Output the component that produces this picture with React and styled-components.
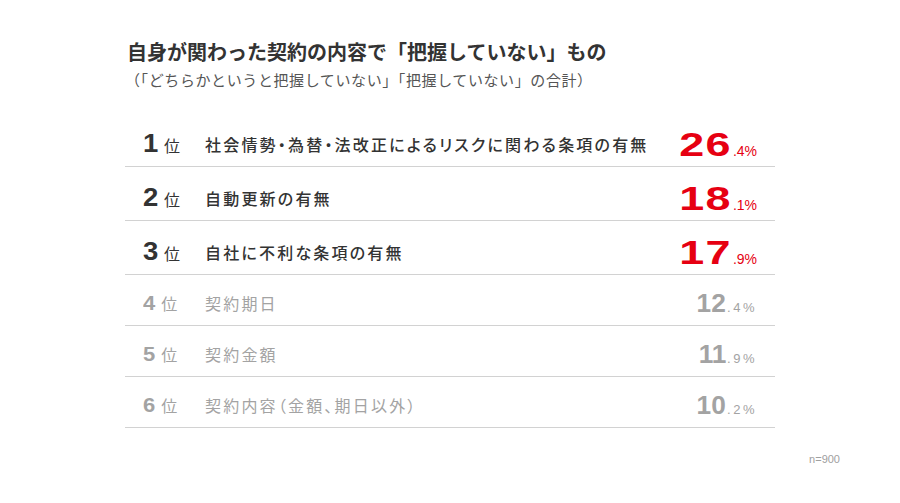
import React from 'react';
import styled, { createGlobalStyle } from 'styled-components';

const GlobalStyle = createGlobalStyle`
    html, body {
        margin: 0;
        padding: 0;
        background: #fff;
    }
    body {
        font-family: "Noto Sans CJK JP", "Noto Sans", sans-serif;
        color: #333;
    }
`;

const Page = styled.div`
    width: 900px;
    height: 503px;
    box-sizing: border-box;
    padding: 38px 60px 0 125px;
    background: #fff;
`;

const Title = styled.h1`
    margin: 0 0 0 2px;
    font-size: 20px;
    line-height: 28px;
    font-weight: 700;
    color: #333;
`;

const Sub = styled.p`
    margin: 3px 0 0 0;
    font-size: 15px;
    line-height: 22px;
    color: #555;
    letter-spacing: 0.6px;
`;

const Table = styled.div`
    width: 650px;
    margin-top: 22px;
    display: flex;
    flex-direction: column;
`;

const Row = styled.div`
    display: grid;
    grid-template-columns: 62px 1fr auto;
    align-items: center;
    box-sizing: border-box;
    height: ${(p) => (p.$top ? 54 : 51)}px;
    padding: ${(p) => (p.$top ? 8 : 6)}px 18px 0 18px;
    border-bottom: 1px solid #d2d2d2;
    color: ${(p) => (p.$top ? '#333' : '#a3a3a3')};
`;

const Rank = styled.div`
    display: flex;
    align-items: baseline;
`;

const RankNum = styled.span`
    display: inline-block;
    font-family: "Liberation Sans", Arial, sans-serif;
    font-weight: 700;
    font-size: ${(p) => (p.$top ? 25 : 20)}px;
    line-height: 1;
    transform: scaleX(1.1);
    transform-origin: left center;
`;

const RankUnit = styled.span`
    margin-left: ${(p) => (p.$top ? 7 : 7)}px;
    font-size: 16px;
    line-height: 1;
`;

const Label = styled.div`
    font-size: 16px;
    font-weight: ${(p) => (p.$top ? 500 : 400)};
    letter-spacing: 2.2px;
    font-feature-settings: "palt";
    white-space: nowrap;
`;

const Value = styled.div`
    display: flex;
    align-items: baseline;
    justify-content: flex-end;
    color: ${(p) => (p.$top ? '#e60012' : '#a3a3a3')};
`;

const Big = styled.span`
    display: inline-block;
    font-family: "Liberation Sans", Arial, sans-serif;
    font-weight: 700;
    font-size: ${(p) => (p.$top ? 34 : 25)}px;
    line-height: 1;
    letter-spacing: ${(p) => (p.$top ? 1 : 0)}px;
    transform: scaleX(${(p) => (p.$top ? 1.32 : 1.05)});
    transform-origin: right center;
`;

const Small = styled.span`
    font-family: "Liberation Sans", Arial, sans-serif;
    font-size: ${(p) => (p.$top ? 14 : 13)}px;
    letter-spacing: ${(p) => (p.$top ? 0 : 2.5)}px;
    margin-left: 1px;
`;

const Footer = styled.div`
    display: flex;
    justify-content: flex-end;
    margin-top: 24px;
    font-family: "Liberation Sans", Arial, sans-serif;
    font-size: 11px;
    line-height: 14px;
    color: #a0a0a0;
`;

const items = [
    { rank: 1, label: '社会情勢・為替・法改正によるリスクに関わる条項の有無', big: '26', small: '.4%' },
    { rank: 2, label: '自動更新の有無', big: '18', small: '.1%' },
    { rank: 3, label: '自社に不利な条項の有無', big: '17', small: '.9%' },
    { rank: 4, label: '契約期日', big: '12', small: '.4%' },
    { rank: 5, label: '契約金額', big: '11', small: '.9%' },
    { rank: 6, label: '契約内容（金額、期日以外）', big: '10', small: '.2%' },
];

const App = () => {
    return (
        <>
            <GlobalStyle />
            <Page>
                <Title>自身が関わった契約の内容で「把握していない」もの</Title>
                <Sub>（「どちらかというと把握していない」「把握していない」の合計）</Sub>
                <Table>
                    {items.map((item) => {
                        const top = item.rank <= 3;
                        return (
                            <Row key={item.rank} $top={top}>
                                <Rank>
                                    <RankNum $top={top}>{item.rank}</RankNum>
                                    <RankUnit $top={top}>位</RankUnit>
                                </Rank>
                                <Label $top={top}>{item.label}</Label>
                                <Value $top={top}>
                                    <Big $top={top}>{item.big}</Big>
                                    <Small $top={top}>{item.small}</Small>
                                </Value>
                            </Row>
                        );
                    })}
                </Table>
                <Footer>n=900</Footer>
            </Page>
        </>
    );
};

export default App;
